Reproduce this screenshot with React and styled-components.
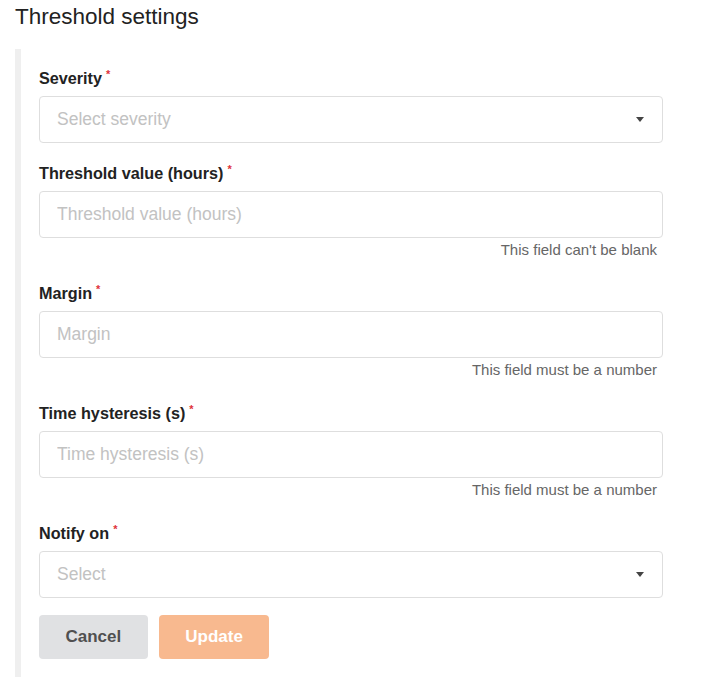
import styled, { createGlobalStyle } from "styled-components";

const GlobalStyle = createGlobalStyle`
  html, body {
    margin: 0;
    padding: 0;
    background: #fff;
    font-family: "Liberation Sans", Arial, sans-serif;
  }
`;

const Page = styled.div`
  padding: 2px 0 8px 15px;
  width: 701px;
  box-sizing: border-box;
`;

const Title = styled.h2`
  margin: 0 0 18px;
  font-size: 22.5px;
  line-height: 29px;
  font-weight: 400;
  color: #222;
`;

const Panel = styled.div`
  border-left: 6px solid #efefef;
  padding: 19px 38px 18px 18px;
`;

const Field = styled.div`
  margin-bottom: ${(p) => (p.$last ? "17px" : "20px")};
`;

const Label = styled.label`
  display: block;
  font-size: 16.2px;
  line-height: 20px;
  font-weight: 700;
  color: #222;
  margin-bottom: 8px;
`;

const Star = styled.sup`
  color: #e0323a;
  font-size: 11px;
  margin-left: 4px;
  vertical-align: 6px;
  line-height: 0;
`;

const Input = styled.input`
  display: block;
  width: 100%;
  box-sizing: border-box;
  height: 47px;
  padding: 0 17px;
  border: 1px solid #dedede;
  border-radius: 4px;
  font-family: inherit;
  font-size: 17.5px;
  color: #333;
  outline: none;

  &::placeholder {
    color: #c2c2c2;
  }
`;

const Select = styled.div`
  display: flex;
  align-items: center;
  justify-content: space-between;
  height: 47px;
  box-sizing: border-box;
  padding: 0 17px;
  border: 1px solid #dedede;
  border-radius: 4px;
  font-size: 17.5px;
  color: #c2c2c2;
`;

const Caret = styled.span`
  width: 0;
  height: 0;
  margin-right: 1px;
  border-left: 4.5px solid transparent;
  border-right: 4.5px solid transparent;
  border-top: 5px solid #444;
`;

const Helper = styled.div`
  text-align: right;
  font-size: 15px;
  line-height: 18px;
  color: #666;
  margin-top: 3px;
  padding: 0 6px 4px 0;
`;

const Actions = styled.div`
  display: flex;
  gap: 11px;
`;

const Button = styled.button`
  height: 44px;
  padding: 0 26.5px;
  border: none;
  border-radius: 4px;
  font-family: inherit;
  font-size: 17px;
  font-weight: 700;
  background: ${(p) => (p.$primary ? "#f8b98f" : "#e0e1e3")};
  color: ${(p) => (p.$primary ? "#fff" : "#505050")};
`;

const fields = [
  { label: "Severity", placeholder: "Select severity", select: true },
  {
    label: "Threshold value (hours)",
    placeholder: "Threshold value (hours)",
    error: "This field can't be blank",
  },
  { label: "Margin", placeholder: "Margin", error: "This field must be a number" },
  {
    label: "Time hysteresis (s)",
    placeholder: "Time hysteresis (s)",
    error: "This field must be a number",
  },
  { label: "Notify on", placeholder: "Select", select: true },
];

export default function App() {
  return (
    <>
      <GlobalStyle />
      <Page>
        <Title>Threshold settings</Title>
        <Panel>
          {fields.map((f, i) => (
            <Field key={f.label} $last={i === fields.length - 1}>
              <Label>
                {f.label}
                <Star>*</Star>
              </Label>
              {f.select ? (
                <Select>
                  <span>{f.placeholder}</span>
                  <Caret />
                </Select>
              ) : (
                <Input placeholder={f.placeholder} />
              )}
              {f.error && <Helper>{f.error}</Helper>}
            </Field>
          ))}
          <Actions>
            <Button>Cancel</Button>
            <Button $primary>Update</Button>
          </Actions>
        </Panel>
      </Page>
    </>
  );
}
